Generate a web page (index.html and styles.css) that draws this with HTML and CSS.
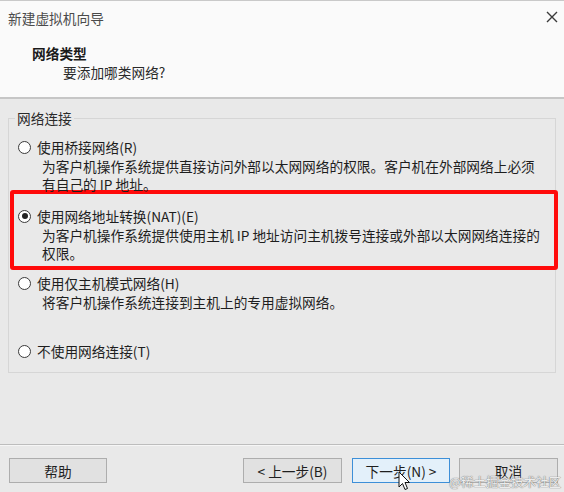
FILE: index.html
```html
<!DOCTYPE html>
<html lang="zh-CN">
<head>
<meta charset="utf-8">
<title>新建虚拟机向导</title>
<link rel="stylesheet" href="styles.css">
</head>
<body>
<div class="window">
  <header class="header">
    <div class="titlebar">
      <span class="title">新建虚拟机向导</span>
      <svg class="close" width="12" height="12" viewBox="0 0 12 12"><path d="M1 1 L11 11 M11 1 L1 11" stroke="#3a3a3a" stroke-width="1.4" fill="none"/></svg>
    </div>
    <div class="heading">
      <div class="heading-title">网络类型</div>
      <div class="heading-sub">要添加哪类网络?</div>
    </div>
  </header>
  <main class="content">
    <fieldset class="group">
      <legend class="legend">网络连接</legend>
      <div class="option first">
        <div class="opt-label"><span class="radio"></span>使用桥接网络(R)</div>
        <div class="opt-desc">为客户机操作系统提供直接访问外部以太网网络的权限。客户机在外部网络上必须<br>有自己的 IP 地址。</div>
      </div>
      <div class="option highlight">
        <div class="opt-label"><span class="radio checked"></span>使用网络地址转换(NAT)(E)</div>
        <div class="opt-desc">为客户机操作系统提供使用主机 IP 地址访问主机拨号连接或外部以太网网络连接的<br>权限。</div>
      </div>
      <div class="option third">
        <div class="opt-label"><span class="radio"></span>使用仅主机模式网络(H)</div>
        <div class="opt-desc">将客户机操作系统连接到主机上的专用虚拟网络。</div>
      </div>
      <div class="option fourth">
        <div class="opt-label"><span class="radio"></span>不使用网络连接(T)</div>
      </div>
    </fieldset>
  </main>
  <footer class="footer">
    <button class="btn help">帮助</button>
    <div class="spacer"></div>
    <button class="btn back">&lt; 上一步(B)</button>
    <button class="btn next">下一步(N) &gt;</button>
    <button class="btn cancel">取消</button>
  </footer>
  <div class="watermark">@稀土掘金技术社区</div>
  <svg class="cursor" width="13" height="21" viewBox="0 0 13 21"><path d="M1 1 L1 16 L4.5 12.5 L7 18.5 L9.5 17.5 L7 11.5 L11.5 11.5 Z" fill="#fff" stroke="#111" stroke-width="1" stroke-linejoin="round"/></svg>
</div>
</body>
</html>
```
FILE: styles.css
```css
* { box-sizing: border-box; }
html, body { margin: 0; padding: 0; }
body {
  width: 564px;
  height: 492px;
  overflow: hidden;
  font-family: "Noto Sans CJK SC", "Noto Sans", sans-serif;
  font-size: 13.7px;
  line-height: 18px;
  color: #1e1e1e;
  background: #e9e9e9;
}
.window {
  position: relative;
  width: 564px;
  height: 492px;
  display: flex;
  flex-direction: column;
}
.header {
  height: 99px;
  background: #fafafa;
  border-top: 1px solid #c9c9c9;
  border-bottom: 2px solid #c6c6c6;
  flex: none;
}
.titlebar {
  display: flex;
  justify-content: space-between;
  align-items: center;
  padding: 8px 8px 0 8px;
  height: 26px;
}
.title { color: #4a4a4a; }
.close { margin-top: -3px; margin-right: -2px; }
.heading { padding-top: 17px; }
.heading-title {
  padding-left: 32px;
  font-weight: bold;
  color: #1a1a1a;
}
.heading-sub {
  padding-left: 63px;
  margin-top: 1px;
  color: #2a2a2a;
}
.content {
  flex: 1;
  padding: 0 8px;
}
.group {
  margin: 10px 0 0 0;
  padding: 0 0 12px 0;
  border: 1px solid #d6d6d6;
  min-width: 0;
}
.legend {
  margin-left: 6px;
  padding: 0 2px;
  color: #2a2a2a;
}
.option { padding-left: 9px; }
.option.first { margin-top: 11px; }
.opt-label { display: flex; align-items: center; }
.radio {
  width: 13px;
  height: 13px;
  border: 1px solid #3a3a3a;
  border-radius: 50%;
  background: #fff;
  margin-right: 6px;
  display: flex;
  align-items: center;
  justify-content: center;
  flex: none;
}
.radio.checked::after {
  content: "";
  width: 6px;
  height: 6px;
  border-radius: 50%;
  background: #222;
}
.opt-desc {
  margin-left: 24px;
  margin-top: 1px;
}
.highlight {
  margin: -3px -3px 0 1px;
  border: 4px solid #ff0a0a;
  border-radius: 3px;
  padding: 13px 0 4px 4px;
}
.option.third { margin-top: 4px; }
.option.fourth { margin-top: 31px; }
.footer {
  flex: none;
  height: 48px;
  border-top: 1px solid #bdbdbd;
  box-shadow: inset 0 1px 0 #f6f6f6;
  display: flex;
  align-items: flex-start;
  padding: 13px 6px 0 9px;
}
.spacer { flex: 1; }
.btn {
  font-family: inherit;
  font-size: 13.7px;
  line-height: 18px;
  color: #1e1e1e;
  height: 25px;
  padding: 0;
  background: #e1e1e1;
  border: 1px solid #adadad;
  border-radius: 0;
}
.help { width: 98px; }
.back { width: 99px; }
.next {
  width: 98px;
  margin-left: 10px;
  background: #e3f0fa;
  border-color: #3d8fd8;
}
.cancel { width: 99px; margin-left: 9px; }
.watermark {
  position: absolute;
  right: 3px;
  bottom: 2px;
  font-size: 12.5px;
  line-height: 16px;
  color: #ececec;
  text-shadow: 0 0 1px #7a7a7a, 0 0 1px #7a7a7a;
}
.cursor {
  position: absolute;
  left: 398px;
  top: 471px;
}
```
